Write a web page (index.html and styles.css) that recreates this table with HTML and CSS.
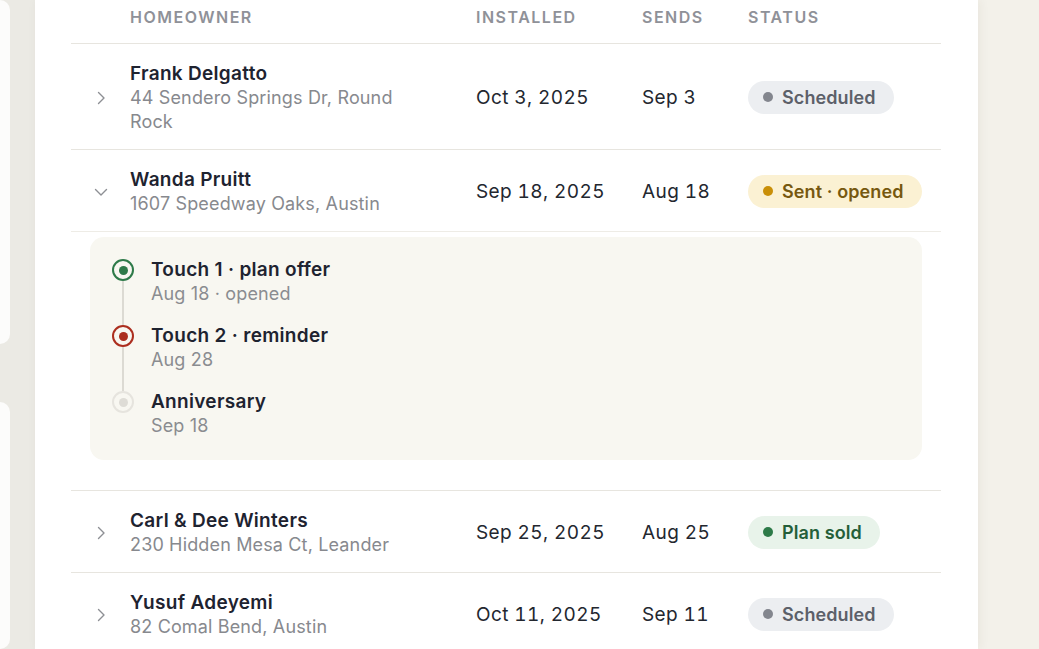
FILE: index.html
```html
<!DOCTYPE html>
<html lang="en">
<head>
    <meta charset="UTF-8">
    <meta name="viewport" content="width=device-width, initial-scale=1.0">
    <title>Follow-ups</title>
    <link rel="stylesheet" href="styles.css">
</head>
<body>
<div class="page">
    <div class="side">
        <div class="side-card side-top"></div>
        <div class="side-card side-bottom"></div>
    </div>
    <div class="panel">
        <div class="list">
            <div class="row head">
                <div></div>
                <div>Homeowner</div>
                <div>Installed</div>
                <div>Sends</div>
                <div>Status</div>
            </div>

            <div class="row">
                <div class="chev">
                    <svg width="14" height="14" viewBox="0 0 14 14"><path d="M4.5 1.5 L10 7 L4.5 12.5" fill="none" stroke="#8d8f94" stroke-width="1.4" stroke-linecap="round" stroke-linejoin="round"/></svg>
                </div>
                <div class="who">
                    <div class="name">Frank Delgatto</div>
                    <div class="addr">44 Sendero Springs Dr, Round Rock</div>
                </div>
                <div class="date">Oct 3, 2025</div>
                <div class="date">Sep 3</div>
                <div><span class="pill pill-gray"><i class="dot"></i>Scheduled</span></div>
            </div>

            <div class="row open">
                <div class="chev">
                    <svg width="14" height="14" viewBox="0 0 14 14"><path d="M1.5 4.5 L7 10 L12.5 4.5" fill="none" stroke="#8d8f94" stroke-width="1.4" stroke-linecap="round" stroke-linejoin="round"/></svg>
                </div>
                <div class="who">
                    <div class="name">Wanda Pruitt</div>
                    <div class="addr">1607 Speedway Oaks, Austin</div>
                </div>
                <div class="date">Sep 18, 2025</div>
                <div class="date">Aug 18</div>
                <div><span class="pill pill-amber"><i class="dot"></i>Sent · opened</span></div>
            </div>

            <div class="detail">
                <div class="timeline">
                    <div class="step">
                        <span class="mark mark-green"></span>
                        <div>
                            <div class="step-title">Touch 1 · plan offer</div>
                            <div class="step-sub">Aug 18 · opened</div>
                        </div>
                    </div>
                    <div class="step">
                        <span class="mark mark-red"></span>
                        <div>
                            <div class="step-title">Touch 2 · reminder</div>
                            <div class="step-sub">Aug 28</div>
                        </div>
                    </div>
                    <div class="step last">
                        <span class="mark mark-idle"></span>
                        <div>
                            <div class="step-title">Anniversary</div>
                            <div class="step-sub">Sep 18</div>
                        </div>
                    </div>
                </div>
            </div>

            <div class="row">
                <div class="chev">
                    <svg width="14" height="14" viewBox="0 0 14 14"><path d="M4.5 1.5 L10 7 L4.5 12.5" fill="none" stroke="#8d8f94" stroke-width="1.4" stroke-linecap="round" stroke-linejoin="round"/></svg>
                </div>
                <div class="who">
                    <div class="name">Carl &amp; Dee Winters</div>
                    <div class="addr">230 Hidden Mesa Ct, Leander</div>
                </div>
                <div class="date">Sep 25, 2025</div>
                <div class="date">Aug 25</div>
                <div><span class="pill pill-green"><i class="dot"></i>Plan sold</span></div>
            </div>

            <div class="row">
                <div class="chev">
                    <svg width="14" height="14" viewBox="0 0 14 14"><path d="M4.5 1.5 L10 7 L4.5 12.5" fill="none" stroke="#8d8f94" stroke-width="1.4" stroke-linecap="round" stroke-linejoin="round"/></svg>
                </div>
                <div class="who">
                    <div class="name">Yusuf Adeyemi</div>
                    <div class="addr">82 Comal Bend, Austin</div>
                </div>
                <div class="date">Oct 11, 2025</div>
                <div class="date">Sep 11</div>
                <div><span class="pill pill-gray"><i class="dot"></i>Scheduled</span></div>
            </div>
        </div>
    </div>
    <div class="rest"></div>
</div>
</body>
</html>
```

FILE: styles.css
```css
body {
    margin: 0;
    padding: 0;
    font-family: Inter, "Noto Sans", sans-serif;
    background-color: #f3f1ea;
    color: #1e2330;
}

.page {
    display: flex;
    height: 649px;
    overflow: hidden;
}

.side {
    width: 35px;
    flex-shrink: 0;
    background-color: #ebeae4;
    display: flex;
    flex-direction: column;
    gap: 58px;
}

.side-card {
    width: 10px;
    background-color: #fcfcfb;
    border-radius: 0 10px 10px 0;
}

.side-top {
    height: 344px;
}

.side-bottom {
    flex-grow: 1;
}

.panel {
    width: 943px;
    flex-shrink: 0;
    background-color: #fff;
    box-shadow: 2px 0 10px rgba(60, 50, 30, 0.06);
    padding: 0 37px 0 36px;
    box-sizing: border-box;
}

.rest {
    flex-grow: 1;
}

.row {
    display: grid;
    grid-template-columns: 59px 346px 166px 106px 1fr;
    align-items: center;
    border-bottom: 1px solid #e7e5df;
    padding: 18px 0 15px;
}

.head {
    padding: 7px 0 16px;
    font-size: 16px;
    font-weight: 600;
    letter-spacing: 1.5px;
    text-transform: uppercase;
    color: #8f9198;
    line-height: 20px;
}

.row.open {
    border-bottom: 1px solid #eeece6;
}

.chev {
    display: flex;
    justify-content: center;
    padding-left: 1px;
}

.chev svg {
    display: block;
}

.who {
    padding-right: 60px;
}

.name {
    font-size: 19px;
    font-weight: 600;
    letter-spacing: 0.3px;
    line-height: 24px;
    color: #1e2330;
}

.addr {
    font-size: 18px;
    letter-spacing: 0.15px;
    line-height: 24px;
    color: #87898e;
}

.date {
    font-size: 19px;
    font-variant-numeric: tabular-nums;
    letter-spacing: 0.4px;
    line-height: 24px;
    color: #23272f;
}

.pill {
    display: inline-flex;
    align-items: center;
    gap: 9px;
    height: 33px;
    padding: 0 18px 0 15px;
    border-radius: 17px;
    font-size: 18px;
    font-weight: 600;
    letter-spacing: 0.1px;
    white-space: nowrap;
    margin-top: -2px;
}

.dot {
    width: 10px;
    height: 10px;
    border-radius: 50%;
    display: inline-block;
}

.pill-gray {
    background-color: #eceef1;
    color: #5c6069;
}

.pill-gray .dot {
    background-color: #83868e;
}

.pill-amber {
    background-color: #fbf1d3;
    color: #76580f;
}

.pill-amber .dot {
    background-color: #c98f08;
}

.pill-green {
    background-color: #e8f3ea;
    color: #245f39;
}

.pill-green .dot {
    background-color: #2d7a48;
}

.detail {
    padding: 5px 19px 30px;
    border-bottom: 1px solid #e7e5df;
}

.timeline {
    background-color: #f8f7f1;
    border-radius: 14px;
    padding: 21px 22px 22px;
    display: flex;
    flex-direction: column;
    gap: 18px;
}

.step {
    display: flex;
    gap: 17px;
    position: relative;
}

.step-title {
    font-size: 19px;
    font-weight: 600;
    letter-spacing: 0.3px;
    line-height: 24px;
    color: #1e2330;
}

.step-sub {
    font-size: 18px;
    letter-spacing: 0.15px;
    line-height: 24px;
    color: #8a8c90;
}

.mark {
    width: 22px;
    height: 22px;
    box-sizing: border-box;
    border-radius: 50%;
    border: 2px solid;
    display: flex;
    align-items: center;
    justify-content: center;
    flex-shrink: 0;
    margin-top: 1px;
    background-color: #f8f7f1;
}

.mark::after {
    content: "";
    width: 9px;
    height: 9px;
    border-radius: 50%;
}

/* connector down to the next mark */
.step::before {
    content: "";
    position: absolute;
    left: 10px;
    top: 23px;
    width: 2px;
    height: 44px;
    background-color: #dcdad3;
}

.step.last::before {
    display: none;
}

.mark-green {
    border-color: #2e7a49;
}

.mark-green::after {
    background-color: #2e7a49;
}

.mark-red {
    border-color: #ac2e1f;
}

.mark-red::after {
    background-color: #ac2e1f;
}

.mark-idle {
    border-color: #e6e4de;
}

.mark-idle::after {
    background-color: #dedcd6;
}
```
